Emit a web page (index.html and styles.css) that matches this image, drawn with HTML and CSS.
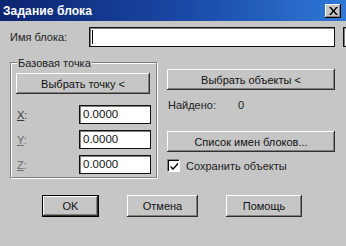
FILE: index.html
```html
<!DOCTYPE html>
<html lang="ru">
<head>
<meta charset="utf-8">
<title>Задание блока</title>
<link rel="stylesheet" href="styles.css">
</head>
<body>
<div class="dialog">
  <div class="titlebar">
    <span class="title">Задание блока</span>
    <button class="close" type="button" aria-label="Закрыть">
      <svg width="9" height="8" viewBox="0 0 9 8"><path d="M0 0h2l2.5 3 2.5-3h2L5.5 4 9 8H7L4.5 5 2 8H0l3.5-4z" fill="#000"/></svg>
    </button>
  </div>
  <div class="content">
    <div class="name-row">
      <label class="name-label">Имя блока:</label>
      <div class="field name-field"><span class="caret"></span></div>
      <div class="field extra-field"></div>
    </div>
    <div class="main">
      <div class="group">
        <span class="legend">Базовая точка</span>
        <button class="btn pick-point" type="button">Выбрать точку &lt;</button>
        <div class="coord-row first"><span class="coord-label"><u>X</u>:</span><div class="field coord">0.0000</div></div>
        <div class="coord-row"><span class="coord-label dim"><u>Y</u>:</span><div class="field coord">0.0000</div></div>
        <div class="coord-row"><span class="coord-label dim"><u>Z</u>:</span><div class="field coord">0.0000</div></div>
      </div>
      <div class="right-col">
        <button class="btn wide" type="button">Выбрать объекты &lt;</button>
        <div class="found-row"><span class="found-label">Найдено:</span><span>0</span></div>
        <button class="btn wide list-btn" type="button">Список имен блоков...</button>
        <div class="check-row">
          <span class="checkbox"><svg width="9" height="9" viewBox="0 0 9 9"><path d="M0.5 3.5l2.5 2.5 5-5.5v2.2l-5 5.3-2.5-2.5z" fill="#000"/></svg></span>
          <span>Сохранить объекты</span>
        </div>
      </div>
    </div>
    <div class="actions">
      <button class="btn default ok" type="button">OK</button>
      <button class="btn cancel" type="button">Отмена</button>
      <button class="btn help" type="button">Помощь</button>
    </div>
  </div>
</div>
</body>
</html>
```
FILE: styles.css
```css
html, body {
  margin: 0;
  padding: 0;
  background: #c6c6c6;
}
body {
  width: 346px;
  height: 246px;
  overflow: hidden;
  font-family: "Liberation Sans", Arial, sans-serif;
  font-size: 11px;
  color: #000;
}
.dialog {
  width: 346px;
  height: 246px;
  display: flex;
  flex-direction: column;
}
.titlebar {
  height: 21px;
  flex: 0 0 21px;
  display: flex;
  align-items: center;
  justify-content: space-between;
  padding: 0 5px 0 3px;
  background: linear-gradient(90deg, #0c2470 0%, #1a4aa8 55%, #2f78d6 100%);
  color: #fff;
}
.title {
  font-weight: bold;
  font-size: 12px;
  letter-spacing: 0.1px;
}
.close {
  width: 16px;
  height: 14px;
  padding: 0;
  margin: 0;
  border: 0;
  background: #c6c6c6;
  box-shadow: inset -1px -1px #000, inset 1px 1px #fff, inset -2px -2px #808080;
  display: flex;
  align-items: center;
  justify-content: center;
}
.content {
  padding: 6px 0 0 10px;
}
.name-row {
  display: flex;
  align-items: center;
  height: 20px;
}
.name-label {
  width: 79px;
  flex: 0 0 79px;
  color: #222;
}
.field {
  box-sizing: border-box;
  background: #fff;
  border: 1px solid #111;
  box-shadow: inset 1px 1px #808080;
}
.name-field {
  width: 246px;
  flex: 0 0 246px;
  height: 20px;
  display: flex;
  align-items: center;
  padding-left: 2px;
}
.caret {
  width: 1px;
  height: 14px;
  background: #000;
}
.extra-field {
  width: 20px;
  flex: 0 0 20px;
  height: 20px;
  margin-left: 8px;
}
.main {
  display: flex;
  margin-top: 15px;
  gap: 10px;
}
.group {
  box-sizing: border-box;
  width: 147px;
  border: 1px solid #808080;
  box-shadow: inset 1px 1px #fff, 1px 1px #fff;
  padding: 0 6px 3px 5px;
  display: flex;
  flex-direction: column;
}
.legend {
  align-self: flex-start;
  margin: -7px 0 3px 1px;
  padding: 0 1px 0 1px;
  height: 14px;
  line-height: 14px;
  background: #c6c6c6;
  color: #222;
}
.btn {
  box-sizing: border-box;
  margin: 0;
  padding: 0;
  border: 0;
  background: #c6c6c6;
  font-family: "Liberation Sans", Arial, sans-serif;
  font-size: 11px;
  color: #111;
  box-shadow: inset -1px -1px #303030, inset 1px 1px #fff, inset -2px -2px #808080;
  text-align: center;
}
.pick-point {
  width: 134px;
  height: 21px;
}
.coord-row {
  display: flex;
  align-items: center;
  height: 19px;
  margin-top: 6px;
}
.coord-row.first {
  margin-top: 11px;
}
.coord-label {
  width: 62px;
  flex: 0 0 62px;
  padding-left: 1px;
  color: #3a3a3a;
}
.coord-label.dim {
  color: #6a6a6a;
}
.coord {
  width: 72px;
  flex: 0 0 72px;
  height: 19px;
  line-height: 17px;
  padding-left: 3px;
  color: #111;
  font-size: 11.5px;
}
.right-col {
  width: 168px;
  padding-top: 7px;
  display: flex;
  flex-direction: column;
}
.wide {
  width: 168px;
  height: 21px;
}
.found-row {
  display: flex;
  height: 14px;
  line-height: 14px;
  margin-top: 8px;
  color: #222;
}
.found-label {
  width: 70px;
  padding-left: 1px;
}
.list-btn {
  margin-top: 19px;
}
.check-row {
  display: flex;
  align-items: center;
  gap: 6px;
  height: 13px;
  margin-top: 7px;
  color: #222;
}
.checkbox {
  box-sizing: border-box;
  width: 13px;
  height: 13px;
  background: #fff;
  border-top: 1px solid #808080;
  border-left: 1px solid #808080;
  border-right: 1px solid #fff;
  border-bottom: 1px solid #fff;
  box-shadow: inset 1px 1px #000;
  display: flex;
  align-items: center;
  justify-content: center;
  padding: 1px 0 0 1px;
}
.actions {
  display: flex;
  gap: 28px;
  margin-top: 17px;
  padding-left: 32px;
}
.actions .btn {
  height: 22px;
}
.ok {
  width: 57px;
}
.default {
  border: 1px solid #000;
  box-shadow: inset -1px -1px #303030, inset 1px 1px #fff, inset -2px -2px #808080;
}
.cancel {
  width: 71px;
}
.help {
  width: 76px;
}
```
